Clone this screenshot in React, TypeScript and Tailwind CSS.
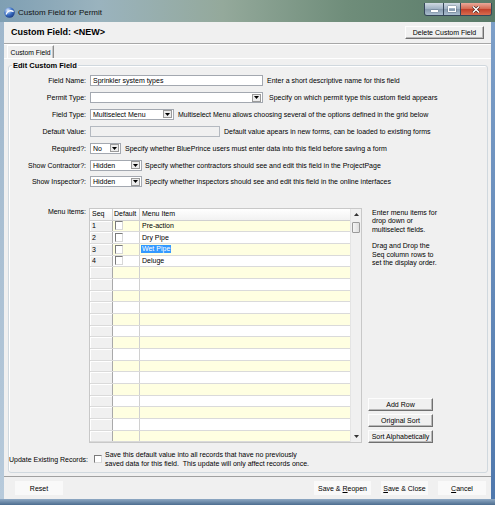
import React from 'react';

const Tri = () => (
  <svg width="5" height="3" viewBox="0 0 5 3">
    <path d="M0 0h5L2.5 3z" fill="#000" />
  </svg>
);

function DropBtn() {
  return (
    <div className="ml-auto mr-[1px] flex h-[8px] w-[9px] shrink-0 items-center justify-center border border-[#9a9a9a] bg-[#ececec]">
      <Tri />
    </div>
  );
}

function Select({ cls, value }: { cls: string; value: string }) {
  return (
    <div className={'flex h-[11px] items-center border border-[#a3a8b0] bg-white ' + cls}>
      <span className="pl-[2px] leading-[9px]">{value}</span>
      <DropBtn />
    </div>
  );
}

function Row({ label, children }: { label: string; children: React.ReactNode }) {
  return (
    <div className="flex h-[16.9px] items-center">
      <div className="w-[77px] shrink-0 text-right">{label}</div>
      <div className="ml-[4px] flex items-center">{children}</div>
    </div>
  );
}

function Help({ children }: { children: React.ReactNode }) {
  return <span className="ml-[4px] whitespace-nowrap">{children}</span>;
}

function RaisedButton({ children, cls }: { children: React.ReactNode; cls: string }) {
  return (
    <div
      className={
        'flex items-center justify-center whitespace-nowrap border border-t-[#fdfdfd] border-l-[#fdfdfd] border-r-[#707070] border-b-[#707070] bg-[#f0f0f0] shadow-[inset_-1px_-1px_0_#b8b8b8] ' +
        cls
      }
    >
      {children}
    </div>
  );
}

function FlatButton({ children, cls }: { children: React.ReactNode; cls: string }) {
  return (
    <div className={'flex h-[14px] items-center justify-center bg-[#f9f9f9] ' + cls}>{children}</div>
  );
}

const items = ['Pre-action', 'Dry Pipe', 'Wet Pipe', 'Deluge'];

function Grid() {
  const rows = Array.from({ length: 19 }, (_, i) => i);
  return (
    <div className="ml-[3px] flex h-[235px] w-[273px] shrink-0 border border-[#c8c8c8] bg-white">
      <div className="flex w-[260px] flex-col">
        <div className="flex h-[11.4px] shrink-0 border-b border-[#d0d0d0] bg-[linear-gradient(180deg,#ffffff,#f2f2f2)] leading-[10px]">
          <div className="w-[23px] border-r border-[#d0d0d0] pl-[2px]">Seq</div>
          <div className="w-[27px] border-r border-[#d0d0d0] pl-[1px]">Default</div>
          <div className="flex-1 pl-[2px]">Menu Item</div>
        </div>
        {rows.map((i) => {
          const bg = i % 2 === 0 ? 'bg-[#ffffe1]' : 'bg-white';
          const item = items[i];
          return (
            <div key={i} className={'flex h-[11.68px] shrink-0 border-b border-[#dadada] ' + bg}>
              <div className="flex w-[23px] items-center border-r border-[#a9a9a9] bg-[#f0f0f0] pl-[2px] shadow-[inset_1px_1px_0_#ffffff]">
                {item ? String(i + 1) : ''}
              </div>
              <div className="flex w-[27px] items-center border-r border-[#d0d0d0] pl-[2px]">
                {item ? (
                  <div className="h-[9px] w-[8px] border border-t-[#7a7a7a] border-l-[#7a7a7a] border-r-[#d8d8d8] border-b-[#d8d8d8] bg-white" />
                ) : null}
              </div>
              <div className="flex flex-1 items-center pl-[1px]">
                {item ? (
                  i === 2 ? (
                    <span className="bg-[#3399ff] px-[1px] leading-[8px] text-white">{item}</span>
                  ) : (
                    <span className="px-[1px]">{item}</span>
                  )
                ) : null}
              </div>
            </div>
          );
        })}
      </div>
      <div className="flex w-[11px] flex-col border-l border-[#e4e4e4] bg-[#f0f0f0]">
        <div className="flex h-[11.4px] items-center justify-center">
          <svg width="5" height="3" viewBox="0 0 5 3">
            <path d="M0 3h5L2.5 0z" fill="#333" />
          </svg>
        </div>
        <div className="mx-[1px] mt-[1px] h-[11px] rounded-[1px] border border-[#9a9a9a] bg-[linear-gradient(90deg,#f4f4f4,#dedede)]" />
        <div className="flex-1" />
        <div className="flex h-[11px] items-center justify-center">
          <svg width="5" height="3" viewBox="0 0 5 3">
            <path d="M0 0h5L2.5 3z" fill="#333" />
          </svg>
        </div>
      </div>
    </div>
  );
}

export default function App() {
  return (
    <div className="flex h-[505px] w-[495px] flex-col overflow-hidden bg-[#6f93c0] font-['Liberation_Sans',Arial,sans-serif] text-[7px] leading-[9px] text-black">
      {/* title bar */}
      <div className="flex h-[22px] shrink-0 items-center bg-[linear-gradient(90deg,#7f9fb3_0%,#9ab3be_20%,#94a99b_45%,#6f8d7a_70%,#587a68_100%)] pl-[4px] pt-[3px]">
        <svg width="11" height="11" viewBox="0 0 11 11">
          <defs>
            <radialGradient id="gl" cx="35%" cy="30%" r="75%">
              <stop offset="0" stopColor="#e4efff" />
              <stop offset="0.55" stopColor="#3d72c8" />
              <stop offset="1" stopColor="#1b3c86" />
            </radialGradient>
          </defs>
          <circle cx="5.5" cy="5.5" r="5.2" fill="url(#gl)" />
          <path d="M2 7.5C3.5 3.5 7 3 9.6 4.6" stroke="#ffffff" strokeWidth="1.3" fill="none" />
        </svg>
        <span className="ml-[3px] text-[8px] leading-[10px] text-[#111]">Custom Field for Permit</span>
        <div className="mr-[3px] ml-auto flex h-[13px] self-start overflow-hidden rounded-b-[3px] border border-t-0 border-[#36475a]">
          <div className="flex w-[19px] items-center justify-center border-r border-[#36475a] bg-[linear-gradient(180deg,#d0dae3,#9db0c2_50%,#8599ad_51%,#aabdce)]">
            <div className="mt-[3px] h-[2px] w-[7px] bg-white shadow-[0_0_1px_#1a2533]" />
          </div>
          <div className="flex w-[17px] items-center justify-center border-r border-[#36475a] bg-[linear-gradient(180deg,#d0dae3,#9db0c2_50%,#8599ad_51%,#aabdce)]">
            <div className="h-[6px] w-[8px] border border-t-2 border-white shadow-[0_0_1px_#1a2533]" />
          </div>
          <div className="flex w-[30px] items-center justify-center bg-[linear-gradient(180deg,#eaa99a,#d4684f_50%,#c23f29_51%,#d96c50)]">
            <svg width="8" height="7" viewBox="0 0 8 7">
              <path d="M1 0.5L7 6.5M7 0.5L1 6.5" stroke="#3a1a14" strokeWidth="2.6" />
              <path d="M1 0.5L7 6.5M7 0.5L1 6.5" stroke="#ffffff" strokeWidth="1.5" />
            </svg>
          </div>
        </div>
      </div>

      <div className="flex min-h-0 flex-1">
        <div className="w-[4px] shrink-0 bg-[linear-gradient(180deg,#9fb7cc,#b7cadb)]" />
        <div className="flex w-[487px] flex-col bg-[#f0f0f0]">
          {/* header */}
          <div className="flex h-[22px] shrink-0 items-center justify-between border-b border-[#a7a7a7] pl-[7px] pr-[7px]">
            <span className="text-[9px] font-bold leading-[11px]">Custom Field: &lt;NEW&gt;</span>
            <RaisedButton cls="h-[13px] w-[79px]">Delete Custom Field</RaisedButton>
          </div>
          {/* tab strip */}
          <div className="flex h-[14px] shrink-0 items-end border-t border-white pl-[3px]">
            <div className="flex h-[13px] w-[47px] items-center justify-center whitespace-nowrap border-l border-t border-r border-l-white border-t-white border-r-[#8c8c8c] bg-[#f0f0f0] text-[6.8px] shadow-[inset_-1px_0_0_#c8c8c8]">
              Custom Field
            </div>
          </div>
          {/* tab panel */}
          <div className="flex h-[418px] shrink-0 flex-col border-t border-white pl-[4px] pr-[3px] pt-[6px]">
            <div className="relative rounded-[3px] border border-[#d0d8de] shadow-[inset_1px_1px_0_#ffffff]">
              <div className="absolute left-[3px] top-[-5px] bg-[#f0f0f0] px-[1px] text-[7.5px] font-bold leading-[10px]">
                Edit Custom Field
              </div>
              <div className="pt-[6.2px]">
                <Row label="Field Name:">
                  <div className="flex h-[11px] w-[173px] items-center border border-[#a3a8b0] bg-white pl-[2px]">
                    Sprinkler system types
                  </div>
                  <Help>Enter a short descriptive name for this field</Help>
                </Row>
                <Row label="Permit Type:">
                  <Select cls="w-[173px]" value="" />
                  <span className="ml-[6px] whitespace-nowrap">Specify on which permit type this custom field appears</span>
                </Row>
                <Row label="Field Type:">
                  <Select cls="w-[84px]" value="Multiselect Menu" />
                  <Help>Multiselect Menu allows choosing several of the options defined in the grid below</Help>
                </Row>
                <Row label="Default Value:">
                  <div className="h-[11px] w-[130px] border border-[#b4b9c0] bg-[#f0f0f0]" />
                  <Help>Default value apears in new forms, can be loaded to existing forms</Help>
                </Row>
                <Row label="Required?:">
                  <Select cls="w-[31px]" value="No" />
                  <Help>Specify whether BluePrince users must enter data into this field before saving a form</Help>
                </Row>
                <Row label="Show Contractor?:">
                  <Select cls="w-[52px]" value="Hidden" />
                  <span className="ml-[3px] whitespace-nowrap">Specify whether contractors should see and edit this field in the ProjectPage</span>
                </Row>
                <Row label="Show Inspector?:">
                  <Select cls="w-[52px]" value="Hidden" />
                  <span className="ml-[3px] whitespace-nowrap">Specify whether inspectors should see and edit this field in the online interfaces</span>
                </Row>
              </div>

              <div className="mt-[17.8px] flex">
                <div className="w-[77px] shrink-0 pt-[0px] text-right leading-[8px]">Menu items:</div>
                <Grid />
                <div className="ml-[6px] flex h-[235px] w-[66px] flex-col justify-between">
                  <div className="whitespace-nowrap pl-[4px] pt-[0.5px] leading-[8.4px]">
                    <div>Enter menu items for</div>
                    <div>drop down or</div>
                    <div>multiselect fields.</div>
                    <div className="h-[8.4px]" />
                    <div>Drag and Drop the</div>
                    <div>Seq column rows to</div>
                    <div>set the display order.</div>
                  </div>
                  <div className="flex flex-col gap-[3px]">
                    <RaisedButton cls="h-[13px] w-[65px]">Add Row</RaisedButton>
                    <RaisedButton cls="h-[13px] w-[65px]">Original Sort</RaisedButton>
                    <RaisedButton cls="h-[13px] w-[65px]">Sort Alphabetically</RaisedButton>
                  </div>
                </div>
              </div>

              <div className="mt-[7px] flex items-center pb-[4px]">
                <div className="w-[79px] shrink-0 text-right">Update Existing Records:</div>
                <div className="ml-[6px] h-[8px] w-[8px] shrink-0 border border-t-[#7a7a7a] border-l-[#7a7a7a] border-r-[#d8d8d8] border-b-[#d8d8d8] bg-white" />
                <div className="ml-[3px] whitespace-pre leading-[9px]">
                  <div>Save this default value into all records that have no previously</div>
                  <div>saved data for this field.  This update will only affect records once.</div>
                </div>
              </div>
            </div>
          </div>
          {/* bottom bar */}
          <div className="flex h-[23px] shrink-0 items-center border-t border-[#a0a0a0] pl-[11px] pr-[5px]">
            <FlatButton cls="w-[48px]">Reset</FlatButton>
            <div className="flex-1" />
            <FlatButton cls="w-[57px]">
              <span>
                Save &amp; <span className="underline">R</span>eopen
              </span>
            </FlatButton>
            <FlatButton cls="ml-[10px] w-[47px]">
              <span>
                <span className="underline">S</span>ave &amp; Close
              </span>
            </FlatButton>
            <FlatButton cls="ml-[10px] w-[48px]">
              <span>
                <span className="underline">C</span>ancel
              </span>
            </FlatButton>
          </div>
        </div>
        <div className="w-[4px] shrink-0 bg-[linear-gradient(180deg,#7d9fc8,#4f78ad)]" />
      </div>
      <div className="h-[6px] shrink-0 bg-[linear-gradient(180deg,#8fa9c4,#4d6d8f)]" />
    </div>
  );
}
